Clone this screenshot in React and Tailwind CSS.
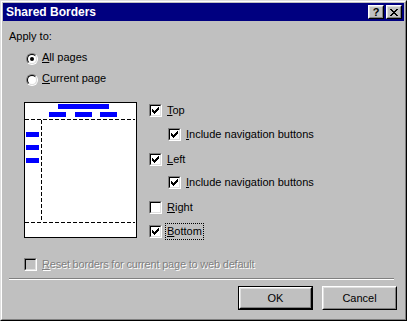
import React from 'react';

const font = { fontFamily: '"Liberation Sans", Arial, sans-serif' };

function Check() {
  // classic 7x7 pixel check mark
  const px = [
    [6, 0], [5, 1], [6, 1], [0, 2], [4, 2], [5, 2], [6, 2],
    [0, 3], [1, 3], [3, 3], [4, 3], [5, 3],
    [0, 4], [1, 4], [2, 4], [3, 4], [4, 4],
    [1, 5], [2, 5], [3, 5], [2, 6],
  ];
  return (
    <svg width="7" height="7" viewBox="0 0 7 7" shapeRendering="crispEdges" className="block">
      {px.map(([x, y]) => (
        <rect key={`${x}-${y}`} x={x} y={y} width="1" height="1" fill="#000" />
      ))}
    </svg>
  );
}

function CheckBox({ checked, disabled }) {
  return (
    <div className="w-[13px] h-[13px] shrink-0 border border-t-[#808080] border-l-[#808080] border-b-white border-r-white">
      <div
        className={`w-full h-full border border-t-black border-l-black border-b-[#dfdfdf] border-r-[#dfdfdf] flex items-center justify-center ${
          disabled ? 'bg-[#c0c0c0]' : 'bg-white'
        }`}
      >
        {checked && <Check />}
      </div>
    </div>
  );
}

function Radio({ checked }) {
  return (
    <div className="w-[12px] h-[12px] shrink-0 rounded-full border border-t-[#808080] border-l-[#808080] border-b-white border-r-white">
      <div className="w-full h-full rounded-full bg-white border border-t-black border-l-black border-b-[#dfdfdf] border-r-[#dfdfdf] flex items-center justify-center">
        {checked && <div className="w-[4px] h-[4px] rounded-full bg-black" />}
      </div>
    </div>
  );
}

function Label({ u, rest, focus, disabled }) {
  return (
    <span
      className={`text-[11px] leading-[13px] whitespace-nowrap ${
        focus ? 'outline outline-1 outline-dotted outline-black outline-offset-[1px]' : ''
      } ${disabled ? 'text-[#808080] tracking-[-0.2px] [text-shadow:1px_1px_0_#fff]' : 'text-black'}`}
    >
      <span className="underline underline-offset-[1px]">{u}</span>
      {rest}
    </span>
  );
}

function CheckRow({ checked, u, rest, focus, className = '' }) {
  return (
    <div className={`flex items-center gap-[5px] ${className}`}>
      <CheckBox checked={checked} />
      <Label u={u} rest={rest} focus={focus} />
    </div>
  );
}

function Preview() {
  return (
    <div className="w-[113px] h-[136px] border border-black bg-white shrink-0">
      <svg width="111" height="134" viewBox="0 0 111 134" shapeRendering="crispEdges" className="block">
        <rect x="33" y="1" width="51" height="5" fill="#0000ff" />
        <rect x="24" y="9" width="17" height="5" fill="#0000ff" />
        <rect x="50" y="9" width="17" height="5" fill="#0000ff" />
        <rect x="75" y="9" width="17" height="5" fill="#0000ff" />
        <rect x="1" y="29" width="13" height="5" fill="#0000ff" />
        <rect x="1" y="42" width="13" height="5" fill="#0000ff" />
        <rect x="1" y="55" width="13" height="5" fill="#0000ff" />
        <line x1="0" y1="16.5" x2="110" y2="16.5" stroke="#000" strokeDasharray="4 2" />
        <line x1="16.5" y1="17" x2="16.5" y2="118" stroke="#000" strokeDasharray="4 2" />
        <line x1="0" y1="119.5" x2="110" y2="119.5" stroke="#000" strokeDasharray="4 2" />
      </svg>
    </div>
  );
}

function Button({ children, isDefault }) {
  const inner = (
    <div className="w-full h-full border border-t-white border-l-white border-b-black border-r-black">
      <div className="w-full h-full border border-t-[#dfdfdf] border-l-[#dfdfdf] border-b-[#808080] border-r-[#808080] flex items-center justify-center text-[11px] text-black">
        {children}
      </div>
    </div>
  );
  return isDefault ? (
    <div className="w-[75px] h-[24px] border border-black">{inner}</div>
  ) : (
    <div className="w-[75px] h-[24px]">{inner}</div>
  );
}

function CaptionButton({ children }) {
  return (
    <div className="w-[16px] h-[14px] bg-[#c0c0c0] border border-t-white border-l-white border-b-black border-r-black">
      <div className="w-full h-full border border-t-[#dfdfdf] border-l-[#dfdfdf] border-b-[#808080] border-r-[#808080] flex items-center justify-center">
        {children}
      </div>
    </div>
  );
}

export default function App() {
  return (
    <div style={font} className="w-[407px] h-[321px] bg-[#c0c0c0] border border-t-[#dfdfdf] border-l-[#dfdfdf] border-b-black border-r-black select-none">
      <div className="w-full h-full border border-t-white border-l-white border-b-[#808080] border-r-[#808080] p-px flex flex-col">
        {/* title bar */}
        <div className="h-[18px] bg-[#000080] flex items-center pl-[3px] pr-[2px]">
          <span className="text-white font-bold text-[12px] leading-none flex-1">Shared Borders</span>
          <div className="flex gap-[2px]">
            <CaptionButton>
              <span className="text-black font-bold text-[11px] leading-none">?</span>
            </CaptionButton>
            <CaptionButton>
              <svg width="8" height="7" viewBox="0 0 8 7" shapeRendering="crispEdges" className="block">
                <path d="M0 0h2v1h-2zM6 0h2v1h-2zM1 1h2v1h-2zM5 1h2v1h-2zM2 2h4v1h-4zM3 3h2v1h-2zM2 4h4v1h-4zM1 5h2v1h-2zM5 5h2v1h-2zM0 6h2v1h-2zM6 6h2v1h-2z" fill="#000" />
              </svg>
            </CaptionButton>
          </div>
        </div>

        {/* body */}
        <div className="flex-1 pl-[6px] pr-[7px]">
          <div className="mt-[9px] text-[11px] leading-[13px] text-black">Apply to:</div>

          <div className="mt-[8px] ml-[17px] flex items-start gap-[4px]">
            <div className="mt-[2px]"><Radio checked /></div>
            <Label u="A" rest="ll pages" />
          </div>
          <div className="mt-[7px] ml-[17px] flex items-start gap-[4px]">
            <div className="mt-[2px]"><Radio /></div>
            <Label u="C" rest="urrent page" />
          </div>

          <div className="mt-[16px] ml-[15px] flex">
            <Preview />
            <div className="ml-[12px] pt-[2px] flex flex-col">
              <CheckRow checked u="T" rest="op" />
              <CheckRow checked u="I" rest="nclude navigation buttons" className="mt-[11px] ml-[19px]" />
              <CheckRow checked u="L" rest="eft" className="mt-[12px]" />
              <CheckRow checked u="I" rest="nclude navigation buttons" className="mt-[10px] ml-[19px]" />
              <CheckRow u="R" rest="ight" className="mt-[12px]" />
              <CheckRow checked u="B" rest="ottom" focus className="mt-[11px]" />
            </div>
          </div>

          <div className="mt-[20px] ml-[15px] flex items-center gap-[5px]">
            <CheckBox disabled />
            <Label u="R" rest="eset borders for current page to web default" disabled />
          </div>

          <div className="mt-[7px] h-[2px] border-t border-t-[#808080] border-b border-b-white mr-[3px]" />

          <div className="mt-[6px] flex justify-end gap-[9px]">
            <Button isDefault>OK</Button>
            <Button>Cancel</Button>
          </div>
        </div>
      </div>
    </div>
  );
}
